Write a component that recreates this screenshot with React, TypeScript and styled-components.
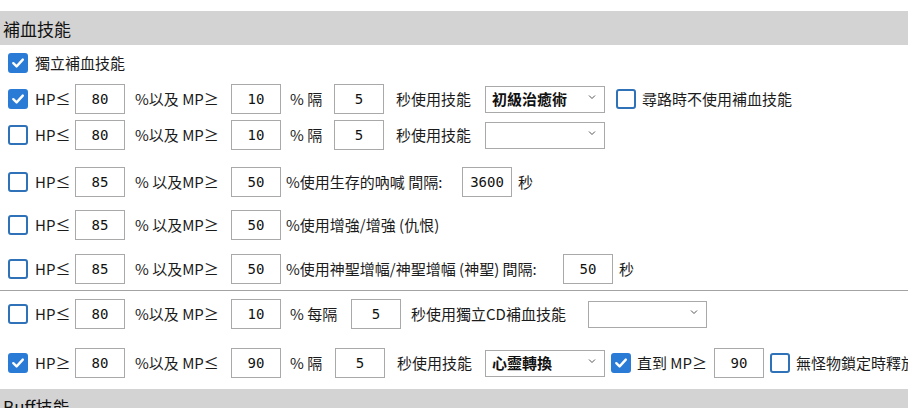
import React from 'react';
import styled, { createGlobalStyle } from 'styled-components';

const GlobalStyle = createGlobalStyle`
    html, body {
        margin: 0;
        padding: 0;
        background: #fff;
    }
    body {
        font-family: 'Noto Sans CJK TC', 'Noto Sans', sans-serif;
        color: #1b1b1b;
        font-size: 15px;
    }
`;

const Page = styled.div`
    width: 908px;
    height: 408px;
    overflow: hidden;
    padding-top: 11px;
    box-sizing: border-box;
`;

const SectionHeader = styled.div<{ $top?: number }>`
    display: flex;
    align-items: center;
    height: 34px;
    margin-top: ${(p) => p.$top ?? 0}px;
    padding-left: 3px;
    background: #d3d3d3;
    font-size: 17px;
    color: #111;
    white-space: nowrap;
`;

const Row = styled.div<{ $top?: number }>`
    display: flex;
    align-items: center;
    height: 36px;
    margin-top: ${(p) => p.$top ?? 0}px;
    padding-left: 8px;
    white-space: nowrap;
`;

const Divider = styled.div<{ $top: number }>`
    height: 1px;
    margin-top: ${(p) => p.$top}px;
    background: #a3a3a3;
`;

const Box = styled.span<{ $on: boolean; $ml?: number }>`
    display: inline-flex;
    align-items: center;
    justify-content: center;
    flex: none;
    width: 20px;
    height: 20px;
    margin-left: ${(p) => p.$ml ?? 0}px;
    box-sizing: border-box;
    border-radius: 3px;
    background: ${(p) => (p.$on ? '#2a7bd6' : '#fff')};
    border: 2px solid ${(p) => (p.$on ? '#2a7bd6' : '#2f72b8')};
`;

const Label = styled.span<{ $w?: number; $pl?: number }>`
    display: inline-block;
    flex: none;
    box-sizing: border-box;
    width: ${(p) => (p.$w ? `${p.$w}px` : 'auto')};
    padding-left: ${(p) => p.$pl ?? 0}px;
    line-height: 20px;
`;

const NumBox = styled.span`
    display: inline-flex;
    align-items: center;
    justify-content: center;
    flex: none;
    width: 50px;
    height: 30px;
    box-sizing: border-box;
    border: 1px solid #a9a9a9;
    font-family: 'DejaVu Sans Mono', 'Liberation Mono', monospace;
    font-size: 14px;
    color: #111;
`;

const SelectBox = styled.span<{ $w?: number }>`
    display: inline-flex;
    align-items: center;
    justify-content: space-between;
    flex: none;
    width: ${(p) => p.$w ?? 120}px;
    height: 27px;
    padding: 0 8px 2px 6px;
    box-sizing: border-box;
    border: 1px solid #a9a9a9;
    font-weight: bold;
    font-size: 15px;
    color: #111;
`;

const Caret = styled.svg`
    width: 8px;
    height: 6px;
    margin-top: -2px;
`;

function Check({ on, ml }: { on: boolean; ml?: number }) {
    return (
        <Box $on={on} $ml={ml}>
            {on && (
                <svg width="14" height="14" viewBox="0 0 14 14">
                    <polyline
                        points="2.3,7.2 5.6,10.4 11.8,3.6"
                        fill="none"
                        stroke="#fff"
                        strokeWidth="2.4"
                        strokeLinecap="round"
                        strokeLinejoin="round"
                    />
                </svg>
            )}
        </Box>
    );
}

function Select({ value, w }: { value?: string; w?: number }) {
    return (
        <SelectBox $w={w}>
            <span>{value ?? ''}</span>
            <Caret viewBox="0 0 8 6">
                <polyline points="1,1.5 4,4.5 7,1.5" fill="none" stroke="#555" strokeWidth="1" />
            </Caret>
        </SelectBox>
    );
}

export default function App() {
    return (
        <Page>
            <GlobalStyle />
            <SectionHeader>補血技能</SectionHeader>

            <Row>
                <Check on />
                <Label $pl={7}>獨立補血技能</Label>
            </Row>

            <Row>
                <Check on />
                <Label $w={47} $pl={7}>HP≤</Label>
                <NumBox>80</NumBox>
                <Label $w={106} $pl={10}>%以及 MP≥</Label>
                <NumBox>10</NumBox>
                <Label $w={53} $pl={9}>% 隔</Label>
                <NumBox>5</NumBox>
                <Label $w={101} $pl={12}>秒使用技能</Label>
                <Select value="初級治癒術" />
                <Check on={false} ml={11} />
                <Label $pl={6}>尋路時不使用補血技能</Label>
            </Row>

            <Row>
                <Check on={false} />
                <Label $w={47} $pl={7}>HP≤</Label>
                <NumBox>80</NumBox>
                <Label $w={106} $pl={10}>%以及 MP≥</Label>
                <NumBox>10</NumBox>
                <Label $w={53} $pl={9}>% 隔</Label>
                <NumBox>5</NumBox>
                <Label $w={101} $pl={12}>秒使用技能</Label>
                <Select />
            </Row>

            <Row $top={11}>
                <Check on={false} />
                <Label $w={47} $pl={7}>HP≤</Label>
                <NumBox>85</NumBox>
                <Label $w={106} $pl={10}>% 以及MP≥</Label>
                <NumBox>50</NumBox>
                <Label $w={181} $pl={5}>%使用生存的吶喊 間隔:</Label>
                <NumBox>3600</NumBox>
                <Label $pl={6}>秒</Label>
            </Row>

            <Row $top={7}>
                <Check on={false} />
                <Label $w={47} $pl={7}>HP≤</Label>
                <NumBox>85</NumBox>
                <Label $w={106} $pl={10}>% 以及MP≥</Label>
                <NumBox>50</NumBox>
                <Label $pl={5}>%使用增強/增強 (仇恨)</Label>
            </Row>

            <Row $top={8}>
                <Check on={false} />
                <Label $w={47} $pl={7}>HP≤</Label>
                <NumBox>85</NumBox>
                <Label $w={106} $pl={10}>% 以及MP≥</Label>
                <NumBox>50</NumBox>
                <Label $w={282} $pl={5}>%使用神聖增幅/神聖增幅 (神聖) 間隔:</Label>
                <NumBox>50</NumBox>
                <Label $pl={6}>秒</Label>
            </Row>

            <Divider $top={3} />

            <Row $top={5}>
                <Check on={false} />
                <Label $w={47} $pl={7}>HP≤</Label>
                <NumBox>80</NumBox>
                <Label $w={106} $pl={10}>%以及 MP≥</Label>
                <NumBox>10</NumBox>
                <Label $w={70} $pl={9}>% 每隔</Label>
                <NumBox>5</NumBox>
                <Label $w={187} $pl={10}>秒使用獨立CD補血技能</Label>
                <Select w={119} />
            </Row>

            <Row $top={13}>
                <Check on />
                <Label $w={47} $pl={7}>HP≥</Label>
                <NumBox>80</NumBox>
                <Label $w={106} $pl={10}>%以及 MP≤</Label>
                <NumBox>90</NumBox>
                <Label $w={54} $pl={9}>% 隔</Label>
                <NumBox>5</NumBox>
                <Label $w={100} $pl={12}>秒使用技能</Label>
                <Select value="心靈轉換" />
                <Check on ml={6} />
                <Label $w={83} $pl={6}>直到 MP≥</Label>
                <NumBox>90</NumBox>
                <Check on={false} ml={6} />
                <Label $pl={6}>無怪物鎖定時釋放</Label>
            </Row>

            <SectionHeader $top={8}>Buff技能</SectionHeader>
        </Page>
    );
}
